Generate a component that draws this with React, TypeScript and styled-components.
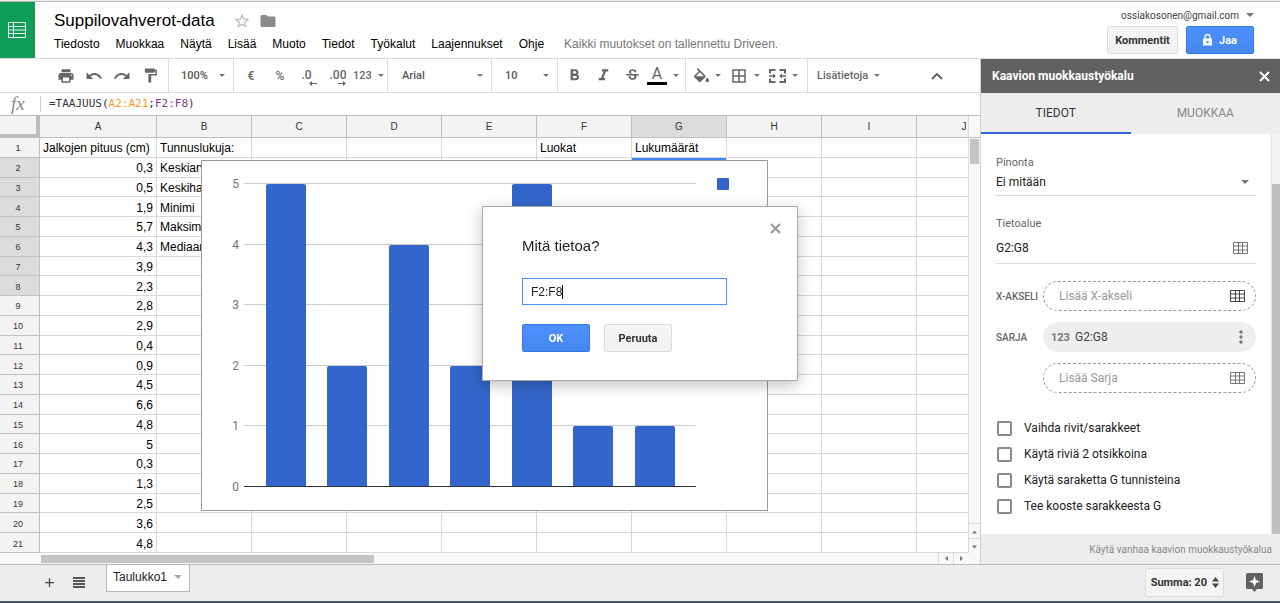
import React from 'react';
import styled, { createGlobalStyle, css } from 'styled-components';
import {
  MdAdd,
  MdBorderAll,
  MdFolder,
  MdFormatBold,
  MdFormatItalic,
  MdFormatPaint,
  MdMoreVert,
  MdPrint,
  MdRedo,
  MdStarBorder,
  MdStrikethroughS,
  MdUndo,
} from 'react-icons/md';

const sans = `'Liberation Sans', Arial, sans-serif`;
const roboto = `Roboto, 'Liberation Sans', sans-serif`;

const GlobalStyle = createGlobalStyle`
  *, *::before, *::after { box-sizing: border-box; }
  body { margin: 0; background: #fff; font-family: ${sans}; color: #222; }
  button, input, select { font: inherit; color: inherit; margin: 0; }
  button { cursor: pointer; }
`;

/* ---------- shell ---------- */

const Page = styled.div`
  display: flex;
  flex-direction: column;
  min-height: 100vh;
  border-top: 1px solid #ededed;
`;

const Header = styled.header`
  display: flex;
  border-top: 1px solid #b8b8b8;
  border-bottom: 1px solid #dcdcdc;
  height: 58px;
`;

const Logo = styled.a`
  display: flex;
  align-items: center;
  justify-content: center;
  width: 35px;
  padding-right: 2px;
  background: #0f9d58;
`;

const Heading = styled.div`
  display: flex;
  flex-direction: column;
  flex: 1;
  padding: 8px 0 0 19px;
`;

const TitleRow = styled.div`
  display: flex;
  align-items: center;
  height: 22px;
`;

const Title = styled.h1`
  margin: 0 18px 0 0;
  font-size: 17px;
  font-weight: 400;
  color: #000;
`;

const TitleButton = styled.button<{ $tone: string }>`
  display: flex;
  align-items: center;
  justify-content: center;
  width: 18px;
  height: 18px;
  margin-right: 8px;
  padding: 0;
  border: 0;
  background: none;
  color: ${(p) => p.$tone};
`;

const MenuRow = styled.nav`
  display: flex;
  align-items: center;
  gap: 16px;
  height: 24px;
  font-size: 12px;
`;

const MenuButton = styled.button`
  padding: 0;
  border: 0;
  background: none;
  color: #000;
`;

const SaveState = styled.span`
  margin-left: 4px;
  color: #777;
`;

const Account = styled.div`
  display: flex;
  flex-direction: column;
  align-items: flex-end;
  padding: 5px 26px 0 0;
`;

const AccountName = styled.button`
  display: flex;
  align-items: center;
  gap: 7px;
  height: 16px;
  padding: 0;
  border: 0;
  background: none;
  font-size: 10px;
  font-family: ${roboto};
  color: #444;
`;

const Actions = styled.div`
  display: flex;
  gap: 8px;
  margin-top: 3px;
`;

const PushButton = styled.button<{ $primary?: boolean; $width: number }>`
  display: flex;
  align-items: center;
  justify-content: center;
  gap: 7px;
  width: ${(p) => p.$width}px;
  height: 28px;
  padding: 0;
  border: 1px solid #dcdcdc;
  border-radius: 2px;
  background: linear-gradient(#f5f5f5, #f1f1f1);
  font: 700 11px ${roboto};
  color: #333;
  ${(p) =>
    p.$primary &&
    css`
      border-color: #3079ed;
      background: linear-gradient(#4d90fe, #4787ed);
      color: #fff;
    `}
`;

const Workspace = styled.div`
  display: flex;
  flex: 1;
`;

const Main = styled.main`
  display: flex;
  flex-direction: column;
  flex: 1;
  min-width: 0;
`;

/* ---------- toolbar ---------- */

const Toolbar = styled.div`
  display: flex;
  height: 34px;
  border-bottom: 1px solid #dcdcdc;
  font: 500 11px ${roboto};
  color: #555;
`;

const Group = styled.div<{ $width?: number; $start?: number; $gap?: number }>`
  display: flex;
  align-items: center;
  gap: ${(p) => p.$gap ?? 0}px;
  flex: ${(p) => (p.$width ? `0 0 ${p.$width}px` : '1')};
  padding-left: ${(p) => p.$start ?? 3}px;
  border-right: ${(p) => (p.$width ? '1px solid #dcdcdc' : '0')};
`;

const Tool = styled.button`
  display: flex;
  align-items: center;
  justify-content: center;
  width: 28px;
  height: 28px;
  padding: 0;
  border: 0;
  background: none;
  color: #666;
  font-weight: 500;
`;

const MenuTool = styled(Tool)`
  gap: 6px;
  width: auto;
`;

const Sign = styled.span`
  font-size: 12px;
`;

const Decimals = styled.span<{ $hang?: boolean }>`
  display: flex;
  flex-direction: column;
  align-items: flex-end;
  padding-top: 4px;
  padding-right: ${(p) => (p.$hang ? 5 : 0)}px;
  font-size: 12px;
  line-height: 11px;

  svg { margin-right: ${(p) => (p.$hang ? -5 : 0)}px; }
`;

const ColorLetter = styled.span`
  display: flex;
  justify-content: center;
  width: 20px;
  border-bottom: 3px solid #000;
  font-size: 16px;
  font-weight: 400;
  line-height: 16px;
`;

const SelectWrap = styled.label`
  display: flex;
  align-items: center;
  flex: 1;
  padding-right: 8px;
`;

const PlainSelect = styled.select`
  flex: 1;
  min-width: 0;
  padding: 0;
  border: 0;
  background: none;
  appearance: none;
`;

const Caret = styled.span<{ $size?: number; $tone?: string }>`
  flex: none;
  width: 0;
  height: 0;
  border: ${(p) => p.$size ?? 3}px solid transparent;
  border-top-color: ${(p) => p.$tone ?? '#777'};
  border-bottom: 0;
`;

const CollapseTool = styled(Tool)`
  margin-left: auto;
  margin-right: 29px;
`;

/* ---------- formula bar ---------- */

const FormulaBar = styled.div`
  display: flex;
  align-items: center;
  height: 23px;
  padding-bottom: 1px;
  border-bottom: 1px solid #c0c0c0;
`;

const Fx = styled.span`
  width: 41px;
  padding-left: 11px;
  border-right: 1px solid #ccc;
  font: italic 19px/16px 'Liberation Serif', serif;
  color: #888;
`;

const Formula = styled.code<{ $tone?: string }>`
  padding-left: ${(p) => (p.$tone ? 0 : 8)}px;
  font: 11px 'DejaVu Sans Mono', monospace;
  color: ${(p) => p.$tone ?? '#333'};
`;

/* ---------- sheet ---------- */

const SheetArea = styled.div`
  position: relative;
  display: flex;
  flex: 1;
`;

const SheetClip = styled.div`
  flex: 1;
  min-width: 0;
  overflow: hidden;
`;

const SheetTable = styled.table`
  table-layout: fixed;
  width: 1012px;
  height: 437px;
  border-collapse: separate;
  border-spacing: 0;
  font-size: 12px;
  color: #000;

  tbody tr { height: 19px; }
`;

const ColHead = styled.th<{ $active?: boolean }>`
  height: 22px;
  padding: 0;
  border: 0 solid #c0c0c0;
  border-width: 0 1px 1px 0;
  background: ${(p) => (p.$active ? '#dcdcdc' : '#f3f3f3')};
  font-size: 10px;
  font-weight: 400;
  color: #333;
`;

const Corner = styled.th`
  padding: 0;
  border: 0 solid #bcbcbc;
  border-width: 0 4px 4px 0;
  background: #f3f3f3;
`;

const RowHead = styled(ColHead)`
  height: auto;
  padding: 2px 3px 0 0;
  font-size: 9px;
`;

const Cell = styled.td<{ $right?: boolean; $selected?: boolean }>`
  padding: 2px 3px 0;
  border: 0 solid #d8d8d8;
  border-width: 0 1px 1px 0;
  line-height: 14px;
  white-space: nowrap;
  text-align: ${(p) => (p.$right ? 'right' : 'left')};
  ${(p) => p.$selected && css`box-shadow: inset 0 0 0 2px #4285f4;`}
`;

const VScroll = styled.div`
  display: flex;
  flex-direction: column;
  width: 12px;
  border-left: 1px solid #d8d8d8;
  background: #f8f8f8;
`;

const VScrollHead = styled.div`
  height: 22px;
  border-bottom: 1px solid #c0c0c0;
`;

const VThumb = styled.div`
  height: 25px;
  margin: 1px;
  background: #c4c4c4;
`;

const ScrollArrow = styled.button<{ $side?: boolean }>`
  display: flex;
  align-items: center;
  justify-content: center;
  width: ${(p) => (p.$side ? '15px' : 'auto')};
  height: ${(p) => (p.$side ? 'auto' : '15px')};
  padding: 0;
  border: 0 solid #d8d8d8;
  border-width: ${(p) => (p.$side ? '0 0 0 1px' : '1px 0 0')};
  background: #f8f8f8;
`;

const Spring = styled.div`
  flex: 1;
`;

const HScroll = styled.div`
  display: flex;
  height: 11px;
  padding-right: 12px;
  background: #f8f8f8;
`;

const HThumb = styled.div`
  width: 333px;
  margin: 2px 0 1px 41px;
  background: #c4c4c4;
`;

const ChartFrame = styled.figure`
  position: absolute;
  left: 201px;
  top: 44px;
  width: 567px;
  height: 351px;
  margin: 0;
  border: 1px solid #999;
  background: #fff;
`;

/* ---------- chart editor ---------- */

const Sidebar = styled.aside`
  display: flex;
  flex-direction: column;
  flex: none;
  width: 300px;
  border-left: 1px solid #d0d0d0;
  font-family: ${roboto};
`;

const SideHeader = styled.div`
  display: flex;
  align-items: center;
  justify-content: space-between;
  height: 34px;
  padding: 0 10px 0 11px;
  background: #616161;
  color: #fff;
`;

const SideTitle = styled.h2`
  margin: 0;
  font-size: 12px;
  font-weight: 700;
`;

const IconButton = styled.button`
  display: flex;
  padding: 0;
  border: 0;
  background: none;
`;

const Tabs = styled.div`
  display: flex;
  background: #ededed;
`;

const Tab = styled.button<{ $active?: boolean }>`
  flex: 1;
  height: 41px;
  padding: 0;
  border: 0;
  border-bottom: 2px solid ${(p) => (p.$active ? '#3367d6' : 'transparent')};
  background: none;
  font-size: 12px;
  color: ${(p) => (p.$active ? '#333' : '#888')};
`;

const SideScroll = styled.div`
  display: flex;
  flex: 1;
`;

const SideBody = styled.div`
  flex: 1;
  min-width: 0;
  padding: 21px 15px 0;
  font-size: 12px;
`;

const SideTrack = styled.div`
  display: flex;
  flex: none;
  width: 9px;
  padding-top: 50px;
  border-left: 1px solid #e4e4e4;
  background: #f4f4f4;
`;

const SideThumb = styled.div`
  flex: 1;
  background: #c1c1c1;
`;

const Field = styled.div<{ $height: number; $value: number }>`
  display: flex;
  flex-direction: column;
  height: ${(p) => p.$height}px;
  margin-bottom: 20px;
  border-bottom: 1px solid #dcdcdc;

  label { font-size: 11px; line-height: 16px; color: #666; }
  & > div {
    display: flex;
    align-items: center;
    height: ${(p) => p.$value}px;
    padding-right: 7px;
  }
`;

const TextInput = styled.input`
  flex: 1;
  min-width: 0;
  padding: 0;
  border: 0;
  background: none;
  outline: 0;
  &::placeholder { color: #999; opacity: 1; }
`;

const Series = styled.div`
  display: flex;
  flex-direction: column;
  gap: 11px;
  margin-top: -3px;
`;

const SeriesRow = styled.div`
  display: flex;
  align-items: center;
  height: 30px;
`;

const SeriesLabel = styled.label`
  flex: none;
  width: 47px;
  font-size: 10px;
  font-weight: 500;
  color: #666;
  white-space: nowrap;
`;

const Pill = styled.div<{ $filled?: boolean }>`
  display: flex;
  align-items: center;
  flex: 1;
  min-width: 0;
  height: 30px;
  padding: 0 9px 0 ${(p) => (p.$filled ? 7 : 15)}px;
  border: 1px ${(p) => (p.$filled ? 'solid #eee' : 'dashed #999')};
  border-radius: 15px;
  background: ${(p) => (p.$filled ? '#eee' : '#fff')};
  color: #444;
`;

const MoreButton = styled(IconButton)`
  margin-right: -5px;
`;

const TypeMark = styled.span`
  width: 24px;
  font-weight: 700;
  font-size: 11px;
  color: #777;
`;

const Checks = styled.div`
  display: flex;
  flex-direction: column;
  margin-top: 22px;
`;

const Check = styled.label`
  display: flex;
  align-items: center;
  gap: 12px;
  height: 26px;
  padding-left: 1px;

  input {
    appearance: none;
    width: 15px;
    height: 15px;
    border: 2px solid #8a8a8a;
    border-radius: 2px;
    background: #fff;
  }
`;

const SideFooter = styled.div`
  display: flex;
  align-items: center;
  justify-content: flex-end;
  height: 30px;
  padding-right: 8px;
  background: #ededed;
  a { font-size: 10px; color: #888; text-decoration: none; }
`;

/* ---------- bottom bar ---------- */

const BottomBar = styled.footer`
  display: flex;
  align-items: center;
  height: 39px;
  padding: 0 17px 2px 42px;
  border-top: 1px solid #b8b8b8;
  border-bottom: 2px solid #4a5468;
  background: #ededed;
  color: #444;
`;

const BarButton = styled(IconButton)`
  width: 31px;
  color: #444;
`;

const SheetTab = styled.button`
  display: flex;
  align-items: center;
  gap: 7px;
  align-self: flex-start;
  height: 27px;
  margin-left: 2px;
  padding: 0 7px 3px 6px;
  border: 1px solid #b8b8b8;
  border-top: 0;
  background: #fff;
  font-size: 12px;
  color: #222;
`;

const Summary = styled.button`
  display: flex;
  align-items: center;
  gap: 5px;
  height: 29px;
  margin-left: auto;
  margin-right: 22px;
  padding: 0 4px 0 5px;
  border: 1px solid #dcdcdc;
  border-radius: 2px;
  background: #f4f4f4;
  font: 700 11px ${roboto};
  color: #333;
`;

/* ---------- dialog ---------- */

const Overlay = styled.div`
  position: fixed;
  inset: 0;
  display: flex;
  align-items: center;
  justify-content: center;
  padding-bottom: 16px;
`;

const Dialog = styled.form`
  display: flex;
  flex-direction: column;
  width: 316px;
  padding: 16px 16px 28px 39px;
  border: 1px solid #aaa;
  background: #fff;
  box-shadow: 0 4px 14px rgba(0, 0, 0, 0.25);
`;

const DialogClose = styled(IconButton)`
  align-self: flex-end;
`;

const DialogTitle = styled.label`
  margin-top: 3px;
  font-size: 15px;
  line-height: 18px;
  color: #222;
`;

const RangeBox = styled.div`
  display: flex;
  align-items: center;
  width: 205px;
  height: 27px;
  margin-top: 23px;
  padding-left: 8px;
  border: 1px solid #4d90fe;
  font-size: 12px;

  input {
    field-sizing: content;
    padding: 0;
    border: 0;
    outline: 0;
    background: none;
  }
`;

const TextCursor = styled.span`
  width: 1px;
  height: 14px;
  background: #000;
`;

const DialogActions = styled.div`
  display: flex;
  gap: 14px;
  margin-top: 19px;
`;

/* ---------- icons ---------- */

const SheetsMark = () => (
  <svg width="18" height="16" viewBox="0 0 18 16" fill="none" stroke="#fff">
    <path d="M.5.5h17v15H.5zM.5 4.500h17M.5 8h17M.5 11.500h17M5.500.5v15" opacity=".9" />
  </svg>
);

const CrossIcon = ({ tone }: { tone: string }) => (
  <svg width="11" height="11" viewBox="0 0 11 11" fill="none" stroke={tone} strokeWidth="2">
    <path d="M1 1l9 9M10 1l-9 9" />
  </svg>
);

const RangeGrid = ({ tone = '#777' }: { tone?: string }) => (
  <svg width="16" height="14" viewBox="0 0 16 14" fill="none" stroke={tone}>
    <path d="M.5 1.500h14v11H.5zM.5 5h14M.5 9h14M5.500 1.500v11M9.500 1.500v11" />
  </svg>
);

const FillIcon = () => (
  <svg width="15" height="15" viewBox="3 0 18 18" fill="currentColor">
    <path d="M16.560 8.940L7.620 0 6.210 1.410l2.380 2.380-5.150 5.150c-.59.59-.59 1.540 0 2.120l5.500 5.500c.29.29.68.44 1.060.44s.77-.15 1.060-.44l5.500-5.500c.59-.58.59-1.530 0-2.120zM5.210 10L10 5.210 14.790 10H5.210zM19 11.500s-2 2.170-2 3.500c0 1.100.9 2 2 2s2-.9 2-2c0-1.330-2-3.500-2-3.500z" />
  </svg>
);

const MergeIcon = () => (
  <svg width="17" height="14" viewBox="0 0 17 14" fill="none" stroke="currentColor" strokeWidth="2">
    <path d="M1 4.500V1h5.500M10.500 1H16v3.500M1 9.500V13h5.500M10.500 13H16V9.500" />
    <path d="M0 7h5M17 7h-5" strokeWidth="1.500" />
    <path d="M4 4.500L7 7 4 9.500zM13 4.500L10 7l3 2.500z" fill="currentColor" stroke="none" />
  </svg>
);

const SmallArrow = ({ flip }: { flip?: boolean }) => (
  <svg width="8" height="5" viewBox="0 0 8 5" fill="currentColor">
    <path d={flip ? 'M0 2h5V0l3 2.500L5 5V3H0z' : 'M8 2H3V0L0 2.500 3 5V3h5z'} />
  </svg>
);

const ChevronUp = () => (
  <svg width="12" height="8" viewBox="0 0 12 8" fill="none" stroke="#666" strokeWidth="2">
    <path d="M1 7l5-5 5 5" />
  </svg>
);

const LockIcon = () => (
  <svg width="9" height="12" viewBox="0 0 9 12" fill="none" stroke="#fff">
    <path d="M2 5V3a2.500 2.500 0 0 1 5 0v2" strokeWidth="1.300" />
    <path d="M0 4.500h9V11.500H0zM3.500 7v2.200h2V7z" fill="#fff" fillRule="evenodd" stroke="none" />
  </svg>
);

const ListIcon = () => (
  <svg width="12" height="11" viewBox="0 0 12 11" fill="#555">
    <path d="M0 0h12v2H0zM0 3h12v2H0zM0 6h12v2H0zM0 9h12v2H0z" />
  </svg>
);

const UpDown = () => (
  <svg width="7" height="11" viewBox="0 0 7 11" fill="#444">
    <path d="M0 4.500L3.500 0 7 4.500zM0 6.500h7L3.500 11z" />
  </svg>
);

const ExploreIcon = () => (
  <svg width="17" height="19" viewBox="0 0 17 19">
    <path d="M1.500 0h14A1.500 1.500 0 0 1 17 1.500v13a1.500 1.500 0 0 1-1.500 1.500H11l-2.500 3L6 16H1.500A1.500 1.500 0 0 1 0 14.500v-13A1.500 1.500 0 0 1 1.500 0z" fill="#616161" />
    <path d="M8.500 3l1.500 4 4 1.500-4 1.500-1.500 4L7 10 3 8.500 7 7z" fill="#fff" />
  </svg>
);

const arrowPaths = {
  up: 'M0 4.500L2.500 1.500 5 4.500z',
  down: 'M0 1.500h5L2.500 4.500z',
  left: 'M4 0v5L1 2.500z',
  right: 'M1 0v5l3-2.500z',
};

const TinyArrow = ({ dir }: { dir: keyof typeof arrowPaths }) => (
  <svg width="5" height="5" viewBox="0 0 5 5" fill="#777">
    <path d={arrowPaths[dir]} />
  </svg>
);

/* ---------- data ---------- */

const menus = ['Tiedosto', 'Muokkaa', 'Näytä', 'Lisää', 'Muoto', 'Tiedot', 'Työkalut', 'Laajennukset', 'Ohje'];
const columns = ['A', 'B', 'C', 'D', 'E', 'F', 'G', 'H', 'I', 'J'];
const columnA = ['Jalkojen pituus (cm)', '0,3', '0,5', '1,9', '5,7', '4,3', '3,9', '2,3', '2,8', '2,9', '0,4', '0,9', '4,5', '6,6', '4,8', '5', '0,3', '1,3', '2,5', '3,6', '4,8'];
const columnB = ['Tunnuslukuja:', 'Keskiarvo', 'Keskihajonta', 'Minimi', 'Maksimi', 'Mediaani'];
const frequencies = [5, 2, 4, 2, 5, 1, 1];
const options = ['Vaihda rivit/sarakkeet', 'Käytä riviä 2 otsikkoina', 'Käytä saraketta G tunnisteina', 'Tee kooste sarakkeesta G'];

const cellText = (row: number, col: string) => {
  if (col === 'A') return columnA[row];
  if (col === 'B') return columnB[row];
  if (row === 0 && col === 'F') return 'Luokat';
  if (row === 0 && col === 'G') return 'Lukumäärät';
  return '';
};

const BarChart = () => {
  const base = 326;
  const y = (v: number) => Math.round(base - v * 60.6);
  return (
    <svg width="565" height="349" viewBox="0 0 565 349" role="img" aria-label="Lukumäärät">
      {[0, 1, 2, 3, 4, 5].map((v) => (
        <g key={v}>
          <rect x="42" y={y(v) - 1} width="452" height="1" fill={v ? '#ccc' : '#333'} />
          <text x="37" y={y(v) + 4} textAnchor="end" fontSize="12" fontFamily="Roboto, sans-serif" fill="#757575">
            {v}
          </text>
        </g>
      ))}
      {frequencies.map((v, i) => {
        const left = Math.floor(64 + i * 61.55);
        const top = y(v);
        return (
          <path
            key={i}
            d={`M${left} ${base - 1}V${top + 2}q0-2 2-2h36q2 0 2 2V${base - 1}z`}
            fill="#3366cc"
          />
        );
      })}
      <rect x="515" y="17" width="12" height="12" rx="1" fill="#3366cc" />
    </svg>
  );
};

const Sheet = () => (
  <SheetTable>
    <colgroup>
      <col width="40" />
      <col width="117" />
      {columns.slice(1).map((c) => (
        <col key={c} width="95" />
      ))}
    </colgroup>
    <thead>
      <tr>
        <Corner />
        {columns.map((c) => (
          <ColHead key={c} scope="col" $active={c === 'G'}>{c}</ColHead>
        ))}
      </tr>
    </thead>
    <tbody>
      {columnA.map((_, r) => (
        <tr key={r}>
          <RowHead scope="row" $active={r > 0 && r < 8}>{r + 1}</RowHead>
          {columns.map((c) => (
            <Cell key={c} $right={c === 'A' && r > 0} $selected={c === 'G' && r === 1}>
              {cellText(r, c)}
            </Cell>
          ))}
        </tr>
      ))}
    </tbody>
  </SheetTable>
);

const ToolSelect = ({ label, value }: { label: string; value: string }) => (
  <SelectWrap>
    <PlainSelect aria-label={label}>
      <option>{value}</option>
    </PlainSelect>
    <Caret />
  </SelectWrap>
);

export default function App() {
  return (
    <Page>
      <GlobalStyle />
      <Header>
        <Logo href="#" aria-label="Sheets"><SheetsMark /></Logo>
        <Heading>
          <TitleRow>
            <Title>Suppilovahverot-data</Title>
            <TitleButton $tone="#bbb" aria-label="Tähti"><MdStarBorder size={18} /></TitleButton>
            <TitleButton $tone="#8a8a8a" aria-label="Kansio"><MdFolder size={18} /></TitleButton>
          </TitleRow>
          <MenuRow>
            {menus.map((m) => <MenuButton key={m}>{m}</MenuButton>)}
            <SaveState>Kaikki muutokset on tallennettu Driveen.</SaveState>
          </MenuRow>
        </Heading>
        <Account>
          <AccountName>ossiakosonen@gmail.com <Caret $size={4} /></AccountName>
          <Actions>
            <PushButton $width={71}>Kommentit</PushButton>
            <PushButton $primary $width={68}><LockIcon /> Jaa</PushButton>
          </Actions>
        </Account>
      </Header>

      <Workspace>
        <Main>
          <Toolbar>
            <Group $width={169} $start={52}>
              <Tool aria-label="Tulosta"><MdPrint size={18} /></Tool>
              <Tool aria-label="Kumoa"><MdUndo size={18} /></Tool>
              <Tool aria-label="Tee uudelleen"><MdRedo size={18} /></Tool>
              <Tool aria-label="Kopioi muotoilu"><MdFormatPaint size={17} /></Tool>
            </Group>
            <Group $width={65} $start={12}><ToolSelect label="Zoomaus" value="100%" /></Group>
            <Group $width={154} $gap={1}>
              <Tool><Sign>€</Sign></Tool>
              <Tool><Sign>%</Sign></Tool>
              <Tool aria-label="Vähennä desimaaleja"><Decimals $hang>.0<SmallArrow /></Decimals></Tool>
              <Tool aria-label="Lisää desimaaleja"><Decimals>.00<SmallArrow flip /></Decimals></Tool>
              <MenuTool>123 <Caret /></MenuTool>
            </Group>
            <Group $width={104} $start={14}><ToolSelect label="Fontti" value="Arial" /></Group>
            <Group $width={66} $start={13}><ToolSelect label="Fonttikoko" value="10" /></Group>
            <Group $width={128} $start={2} $gap={1}>
              <Tool aria-label="Lihavointi"><MdFormatBold size={19} /></Tool>
              <Tool aria-label="Kursivointi"><MdFormatItalic size={19} /></Tool>
              <Tool aria-label="Yliviivaus"><MdStrikethroughS size={17} /></Tool>
              <MenuTool aria-label="Tekstin väri"><ColorLetter>A</ColorLetter><Caret /></MenuTool>
            </Group>
            <Group $width={122} $start={8} $gap={9}>
              <MenuTool aria-label="Täyttöväri"><FillIcon /><Caret /></MenuTool>
              <MenuTool aria-label="Reunat"><MdBorderAll size={18} /><Caret /></MenuTool>
              <MenuTool aria-label="Yhdistä solut"><MergeIcon /><Caret /></MenuTool>
            </Group>
            <Group $start={9}>
              <MenuTool>Lisätietoja <Caret /></MenuTool>
              <CollapseTool aria-label="Piilota valikot"><ChevronUp /></CollapseTool>
            </Group>
          </Toolbar>
          <FormulaBar>
            <Fx>fx</Fx>
            <Formula>=TAAJUUS(</Formula>
            <Formula $tone="#f7981d">A2:A21</Formula>
            <Formula $tone="#333">;</Formula>
            <Formula $tone="#7e3794">F2:F8</Formula>
            <Formula $tone="#333">)</Formula>
          </FormulaBar>
          <SheetArea>
            <SheetClip><Sheet /></SheetClip>
            <VScroll>
              <VScrollHead />
              <VThumb />
              <Spring />
              <ScrollArrow aria-label="Ylös"><TinyArrow dir="up" /></ScrollArrow>
              <ScrollArrow aria-label="Alas"><TinyArrow dir="down" /></ScrollArrow>
            </VScroll>
            <ChartFrame><BarChart /></ChartFrame>
          </SheetArea>
          <HScroll>
            <HThumb />
            <Spring />
            <ScrollArrow $side aria-label="Vasemmalle"><TinyArrow dir="left" /></ScrollArrow>
            <ScrollArrow $side aria-label="Oikealle"><TinyArrow dir="right" /></ScrollArrow>
          </HScroll>
        </Main>

        <Sidebar>
          <SideHeader>
            <SideTitle>Kaavion muokkaustyökalu</SideTitle>
            <IconButton aria-label="Sulje"><CrossIcon tone="#fff" /></IconButton>
          </SideHeader>
          <Tabs>
            <Tab $active>TIEDOT</Tab>
            <Tab>MUOKKAA</Tab>
          </Tabs>
          <SideScroll>
            <SideBody>
              <Field $height={41} $value={22}>
                <label htmlFor="stacking">Pinonta</label>
                <div>
                  <PlainSelect id="stacking"><option>Ei mitään</option></PlainSelect>
                  <Caret $size={4} />
                </div>
              </Field>
              <Field $height={48} $value={31}>
                <label htmlFor="range">Tietoalue</label>
                <div>
                  <TextInput id="range" defaultValue="G2:G8" />
                  <RangeGrid />
                </div>
              </Field>
              <Series>
                <SeriesRow>
                  <SeriesLabel htmlFor="xaxis">X-AKSELI</SeriesLabel>
                  <Pill><TextInput id="xaxis" placeholder="Lisää X-akseli" /><RangeGrid tone="#444" /></Pill>
                </SeriesRow>
                <SeriesRow>
                  <SeriesLabel htmlFor="series">SARJA</SeriesLabel>
                  <Pill $filled>
                    <TypeMark>123</TypeMark>
                    <TextInput id="series" defaultValue="G2:G8" />
                    <MoreButton aria-label="Lisää toimintoja"><MdMoreVert size={20} color="#777" /></MoreButton>
                  </Pill>
                </SeriesRow>
                <SeriesRow>
                  <SeriesLabel />
                  <Pill><TextInput aria-label="Lisää Sarja" placeholder="Lisää Sarja" /><RangeGrid /></Pill>
                </SeriesRow>
              </Series>
              <Checks>
                {options.map((o) => (
                  <Check key={o}><input type="checkbox" />{o}</Check>
                ))}
              </Checks>
            </SideBody>
            <SideTrack><SideThumb /></SideTrack>
          </SideScroll>
          <SideFooter><a href="#">Käytä vanhaa kaavion muokkaustyökalua</a></SideFooter>
        </Sidebar>
      </Workspace>

      <BottomBar>
        <BarButton aria-label="Lisää taulukko"><MdAdd size={15} /></BarButton>
        <BarButton aria-label="Kaikki taulukot"><ListIcon /></BarButton>
        <SheetTab>Taulukko1 <Caret $size={4} $tone="#aaa" /></SheetTab>
        <Summary>Summa: 20 <UpDown /></Summary>
        <IconButton aria-label="Tutki"><ExploreIcon /></IconButton>
      </BottomBar>

      <Overlay>
        <Dialog onSubmit={(e) => e.preventDefault()}>
          <DialogClose type="button" aria-label="Sulje"><CrossIcon tone="#999" /></DialogClose>
          <DialogTitle htmlFor="data-range">Mitä tietoa?</DialogTitle>
          <RangeBox>
            <input id="data-range" defaultValue="F2:F8" />
            <TextCursor />
          </RangeBox>
          <DialogActions>
            <PushButton $primary $width={68}>OK</PushButton>
            <PushButton type="button" $width={68}>Peruuta</PushButton>
          </DialogActions>
        </Dialog>
      </Overlay>
    </Page>
  );
}
